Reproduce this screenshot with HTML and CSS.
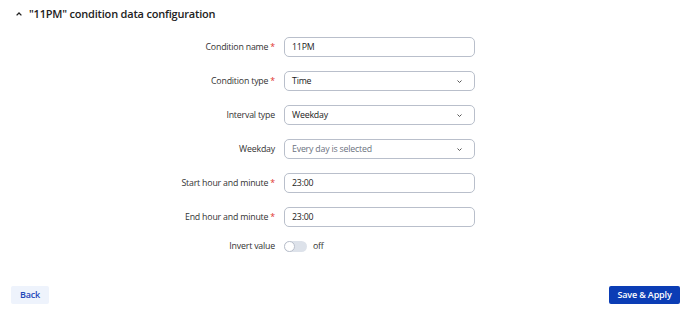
FILE: index.html
```html
<!DOCTYPE html>
<html>
<head>
<meta charset="utf-8">
<link rel="stylesheet" href="styles.css">
</head>
<body>
<div class="page">
  <div class="header">
    <svg class="collapse" width="6" height="4" viewBox="0 0 6 4"><path d="M0.6 3.4 L3 1 L5.4 3.4" fill="none" stroke="#222" stroke-width="1.3"/></svg>
    <span class="title">"11PM" condition data configuration</span>
  </div>
  <div class="form">
    <div class="label">Condition name <span class="req">*</span></div>
    <div class="input">11PM</div>

    <div class="label">Condition type <span class="req">*</span></div>
    <div class="input select">Time<svg class="chev" width="5" height="3" viewBox="0 0 5 3"><path d="M0.5 0.5 L2.5 2.5 L4.5 0.5" fill="none" stroke="#555" stroke-width="1"/></svg></div>

    <div class="label">Interval type</div>
    <div class="input select">Weekday<svg class="chev" width="5" height="3" viewBox="0 0 5 3"><path d="M0.5 0.5 L2.5 2.5 L4.5 0.5" fill="none" stroke="#555" stroke-width="1"/></svg></div>

    <div class="label">Weekday</div>
    <div class="input select placeholder">Every day is selected<svg class="chev" width="5" height="3" viewBox="0 0 5 3"><path d="M0.5 0.5 L2.5 2.5 L4.5 0.5" fill="none" stroke="#555" stroke-width="1"/></svg></div>

    <div class="label">Start hour and minute <span class="req">*</span></div>
    <div class="input">23:00</div>

    <div class="label">End hour and minute <span class="req">*</span></div>
    <div class="input">23:00</div>

    <div class="label toggle-label">Invert value</div>
    <div class="toggle-wrap">
      <span class="toggle"><span class="knob"></span></span>
      <span class="toggle-text">off</span>
    </div>
  </div>
  <div class="footer">
    <button class="btn back">Back</button>
    <button class="btn save">Save &amp; Apply</button>
  </div>
</div>
</body>
</html>
```
FILE: styles.css
```css
html, body {
  margin: 0;
  padding: 0;
  background: #fff;
}
body {
  font-family: "Open Sans", "Liberation Sans", sans-serif;
  color: #333;
}
.page {
  width: 690px;
  height: 318px;
  display: flex;
  flex-direction: column;
}
.header {
  display: flex;
  align-items: center;
  height: 18px;
  padding: 5px 0 0 16px;
  gap: 7px;
}
.collapse {
  display: block;
}
.title {
  font-size: 11px;
  letter-spacing: -0.2px;
  font-weight: 600;
  color: #222;
  line-height: 18px;
}
.form {
  display: grid;
  grid-template-columns: 275px 191px;
  column-gap: 9px;
  row-gap: 14px;
  margin-top: 14px;
  align-items: center;
}
.label {
  font-size: 8.8px;
  letter-spacing: -0.2px;
  text-align: right;
  color: #333;
  line-height: 20px;
}
.req {
  color: #e0342c;
}
.input {
  box-sizing: border-box;
  height: 20px;
  border: 1px solid #b9bfcb;
  border-radius: 5px;
  font-size: 8.8px;
  letter-spacing: -0.2px;
  line-height: 18px;
  padding: 0 0 0 7px;
  color: #222;
  display: flex;
  align-items: center;
  justify-content: space-between;
}
.select {
  padding-right: 12px;
}
.placeholder {
  color: #6b7280;
}
.chev {
  display: block;
}
.toggle-label {
  line-height: 11px;
}
.toggle-wrap {
  display: flex;
  align-items: center;
  gap: 6px;
  height: 11px;
}
.toggle {
  position: relative;
  box-sizing: border-box;
  width: 23px;
  height: 11px;
  border-radius: 6px;
  background: #dde2ea;
}
.knob {
  position: absolute;
  left: 0;
  top: 0;
  box-sizing: border-box;
  width: 11px;
  height: 11px;
  border-radius: 50%;
  background: #fff;
  border: 1px solid #b9bfcb;
}
.toggle-text {
  font-size: 8.8px;
  letter-spacing: -0.2px;
  color: #333;
  line-height: 11px;
}
.footer {
  display: flex;
  justify-content: space-between;
  padding: 0 10px 0 11px;
  margin-top: 34px;
}
.btn {
  height: 18px;
  border: none;
  border-radius: 2px;
  font-family: "Open Sans", "Liberation Sans", sans-serif;
  font-size: 9px;
  letter-spacing: -0.15px;
  font-weight: 600;
  padding: 0;
  line-height: 18px;
}
.back {
  width: 38px;
  background: #eef3fc;
  color: #1d46b8;
}
.save {
  width: 71px;
  background: #0b3db5;
  color: #fff;
}
```
